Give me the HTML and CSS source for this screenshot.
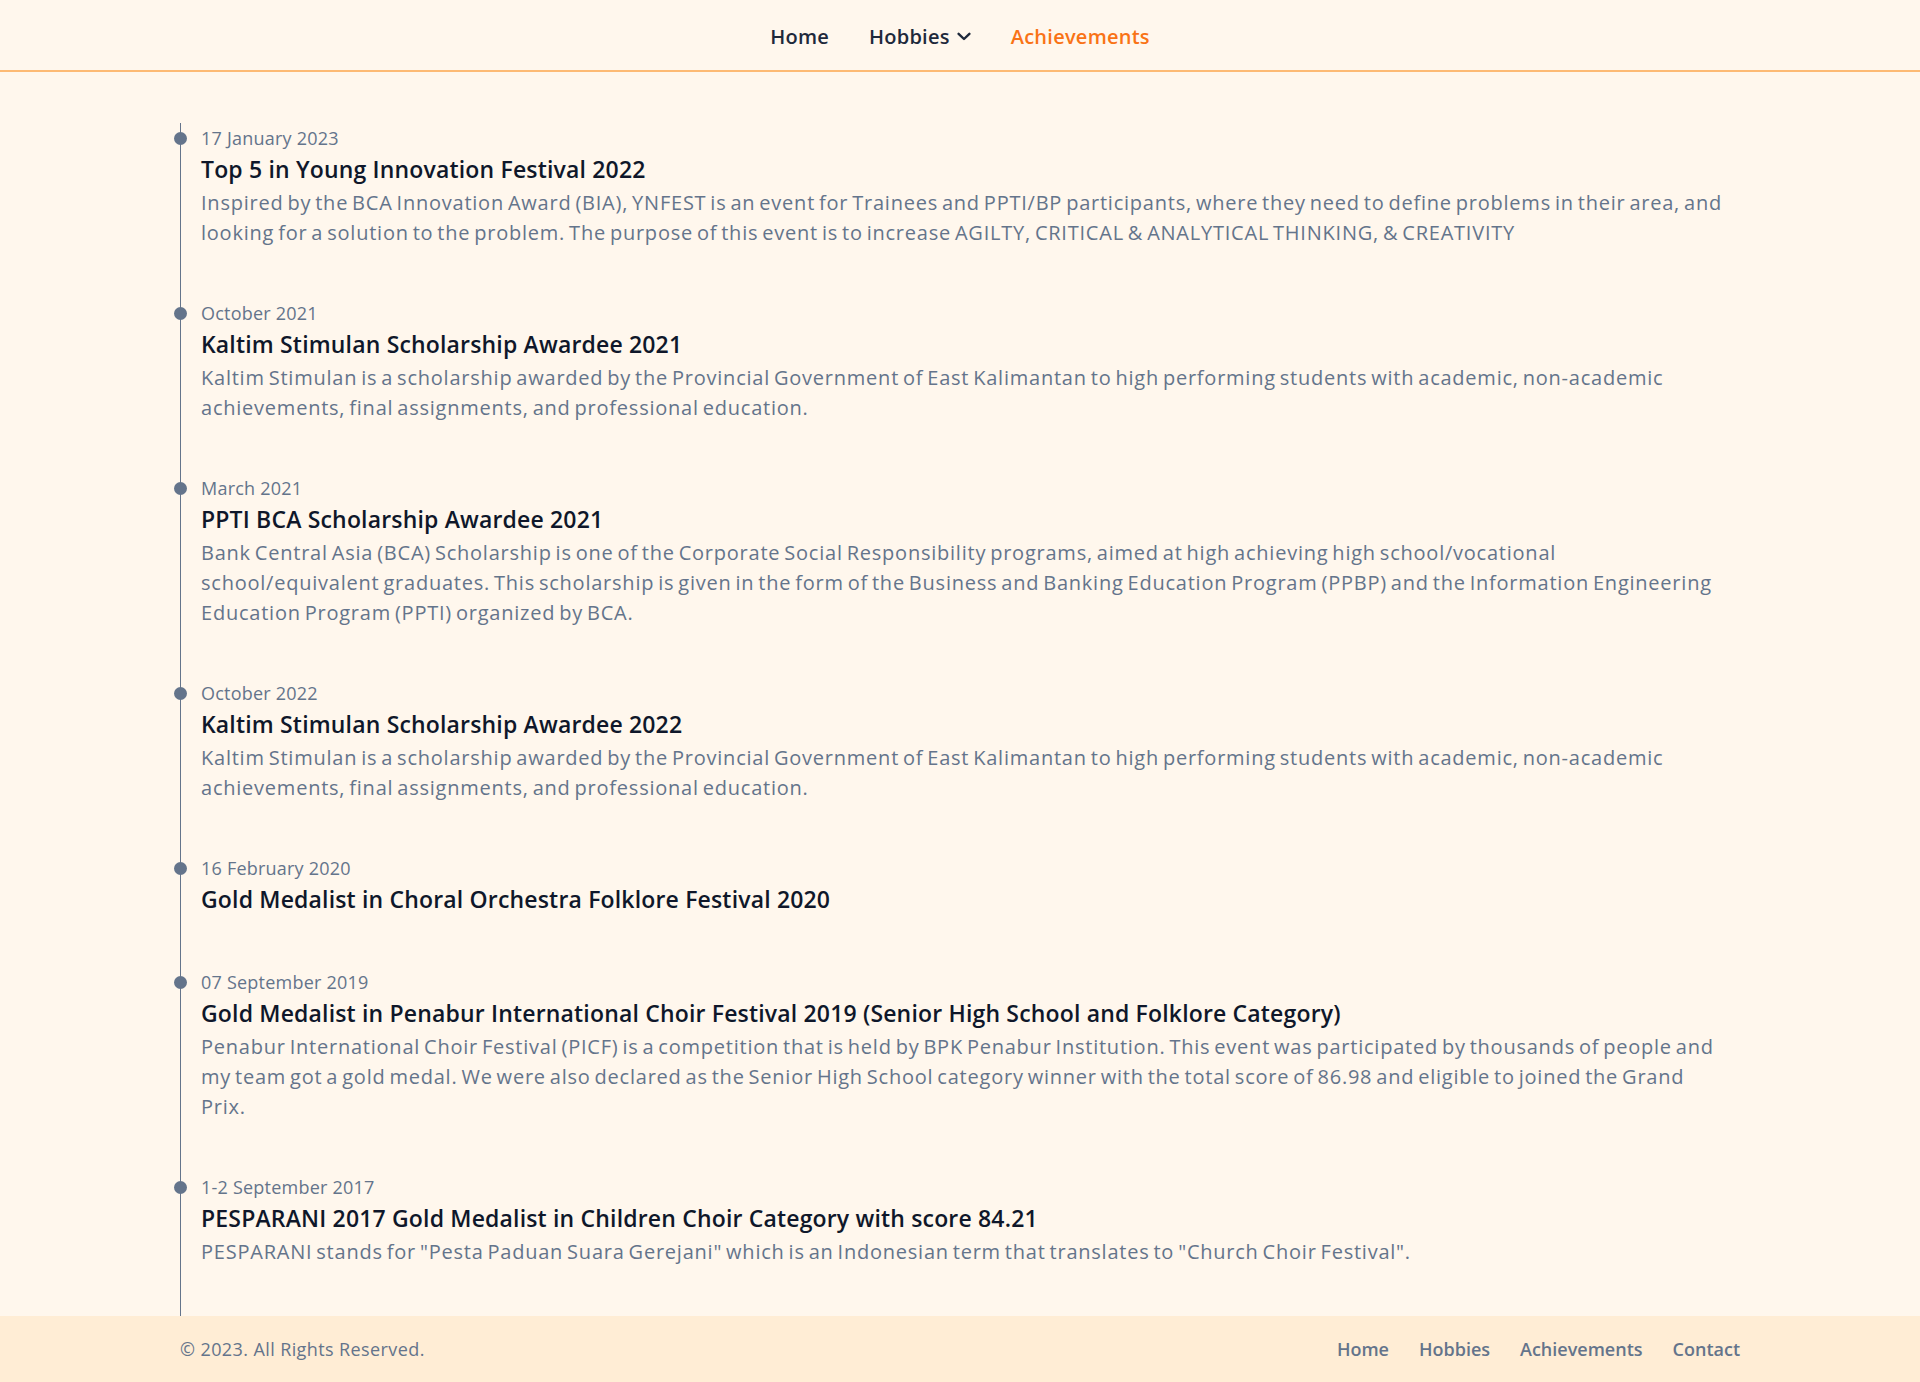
FILE: index.html
```html
<!DOCTYPE html>
<html lang="en">
<head>
<meta charset="utf-8">
<title>Achievements</title>
<link rel="stylesheet" href="styles.css">
</head>
<body>
<header class="topbar">
  <nav class="topnav">
    <a class="topnav-link" href="#">Home</a>
    <a class="topnav-link" href="#">Hobbies
      <svg class="chev" width="14" height="9" viewBox="0 0 14 9" aria-hidden="true"><path d="M1.6 1.8 L7 7 L12.4 1.8" fill="none" stroke="currentColor" stroke-width="2.4" stroke-linecap="round" stroke-linejoin="round"/></svg>
    </a>
    <a class="topnav-link active" href="#">Achievements</a>
  </nav>
</header>

<main class="content">
  <ol class="timeline">
    <li class="tl-item">
      <span class="tl-dot"></span>
      <time class="tl-date">17 January 2023</time>
      <h3 class="tl-title">Top 5 in Young Innovation Festival 2022</h3>
      <p class="tl-desc">Inspired by the BCA Innovation Award (BIA), YNFEST is an event for Trainees and PPTI/BP participants, where they need to define problems in their area, and looking for a solution to the problem. The purpose of this event is to increase AGILTY, CRITICAL &amp; ANALYTICAL THINKING, &amp; CREATIVITY</p>
    </li>
    <li class="tl-item">
      <span class="tl-dot"></span>
      <time class="tl-date">October 2021</time>
      <h3 class="tl-title">Kaltim Stimulan Scholarship Awardee 2021</h3>
      <p class="tl-desc">Kaltim Stimulan is a scholarship awarded by the Provincial Government of East Kalimantan to high performing students with academic, non-academic achievements, final assignments, and professional education.</p>
    </li>
    <li class="tl-item">
      <span class="tl-dot"></span>
      <time class="tl-date">March 2021</time>
      <h3 class="tl-title">PPTI BCA Scholarship Awardee 2021</h3>
      <p class="tl-desc">Bank Central Asia (BCA) Scholarship is one of the Corporate Social Responsibility programs, aimed at high achieving high school/vocational school/equivalent graduates. This scholarship is given in the form of the Business and Banking Education Program (PPBP) and the Information Engineering Education Program (PPTI) organized by BCA.</p>
    </li>
    <li class="tl-item">
      <span class="tl-dot"></span>
      <time class="tl-date">October 2022</time>
      <h3 class="tl-title">Kaltim Stimulan Scholarship Awardee 2022</h3>
      <p class="tl-desc">Kaltim Stimulan is a scholarship awarded by the Provincial Government of East Kalimantan to high performing students with academic, non-academic achievements, final assignments, and professional education.</p>
    </li>
    <li class="tl-item">
      <span class="tl-dot"></span>
      <time class="tl-date">16 February 2020</time>
      <h3 class="tl-title">Gold Medalist in Choral Orchestra Folklore Festival 2020</h3>
    </li>
    <li class="tl-item">
      <span class="tl-dot"></span>
      <time class="tl-date">07 September 2019</time>
      <h3 class="tl-title">Gold Medalist in Penabur International Choir Festival 2019 (Senior High School and Folklore Category)</h3>
      <p class="tl-desc">Penabur International Choir Festival (PICF) is a competition that is held by BPK Penabur Institution. This event was participated by thousands of people and my team got a gold medal. We were also declared as the Senior High School category winner with the total score of 86.98 and eligible to joined the Grand Prix.</p>
    </li>
    <li class="tl-item">
      <span class="tl-dot"></span>
      <time class="tl-date">1-2 September 2017</time>
      <h3 class="tl-title">PESPARANI 2017 Gold Medalist in Children Choir Category with score 84.21</h3>
      <p class="tl-desc">PESPARANI stands for "Pesta Paduan Suara Gerejani" which is an Indonesian term that translates to "Church Choir Festival".</p>
    </li>
  </ol>
</main>

<footer class="footer">
  <span class="copy">© 2023. All Rights Reserved.</span>
  <nav class="footnav">
    <a class="footnav-link" href="#">Home</a>
    <a class="footnav-link" href="#">Hobbies</a>
    <a class="footnav-link" href="#">Achievements</a>
    <a class="footnav-link" href="#">Contact</a>
  </nav>
</footer>
</body>
</html>
```

FILE: styles.css
```css
* { box-sizing: border-box; }

html, body {
  margin: 0;
  padding: 0;
}

body {
  min-height: 100vh;
  display: flex;
  flex-direction: column;
  background: #fff7ed;
  font-family: "Open Sans", "Noto Sans", sans-serif;
  color: #64748b;
}

a { text-decoration: none; }

.topbar {
  height: 72px;
  flex: none;
  border-bottom: 2px solid #fdba74;
  display: flex;
  align-items: center;
  justify-content: center;
}

.topnav {
  display: flex;
  align-items: center;
  gap: 40px;
  padding-top: 2px;
}

.topnav-link {
  font-size: 20px;
  font-weight: 600;
  letter-spacing: 0.25px;
  color: #1e293b;
  display: inline-flex;
  align-items: center;
  gap: 7px;
}

.topnav-link.active { color: #f97316; }

.chev { display: block; margin-top: 1px; }

.content {
  flex: 1;
  display: flex;
  flex-direction: column;
  padding: 51px 180px 0;
}

.timeline {
  flex: 1;
  list-style: none;
  margin: 0;
  padding: 2px 0 47px;
  border-left: 1px solid #64748b;
  display: flex;
  flex-direction: column;
  gap: 52px;
}

.tl-item {
  position: relative;
  padding-left: 20px;
}

.tl-dot {
  position: absolute;
  left: -7px;
  top: 7px;
  width: 13px;
  height: 13px;
  border-radius: 50%;
  background: #64748b;
}

.tl-date {
  display: block;
  font-size: 18px;
  line-height: 27px;
  letter-spacing: 0.22px;
  color: #64748b;
}

.tl-title {
  margin: 0;
  font-size: 23px;
  line-height: 35px;
  font-weight: 600;
  letter-spacing: 0.17px;
  color: #0f172a;
}

.tl-desc {
  margin: 1px 10px 0 0;
  font-size: 20px;
  line-height: 30px;
  letter-spacing: 0.77px;
  word-spacing: -2px;
  color: #64748b;
}

.footer {
  height: 66px;
  flex: none;
  background: #ffedd5;
  display: flex;
  align-items: center;
  justify-content: space-between;
  padding: 0 180px;
}

.copy {
  font-size: 18px;
  letter-spacing: 0.4px;
  color: #64748b;
}

.footnav {
  display: flex;
  gap: 30px;
}

.footnav-link {
  font-size: 18px;
  font-weight: 600;
  color: #64748b;
}
```
